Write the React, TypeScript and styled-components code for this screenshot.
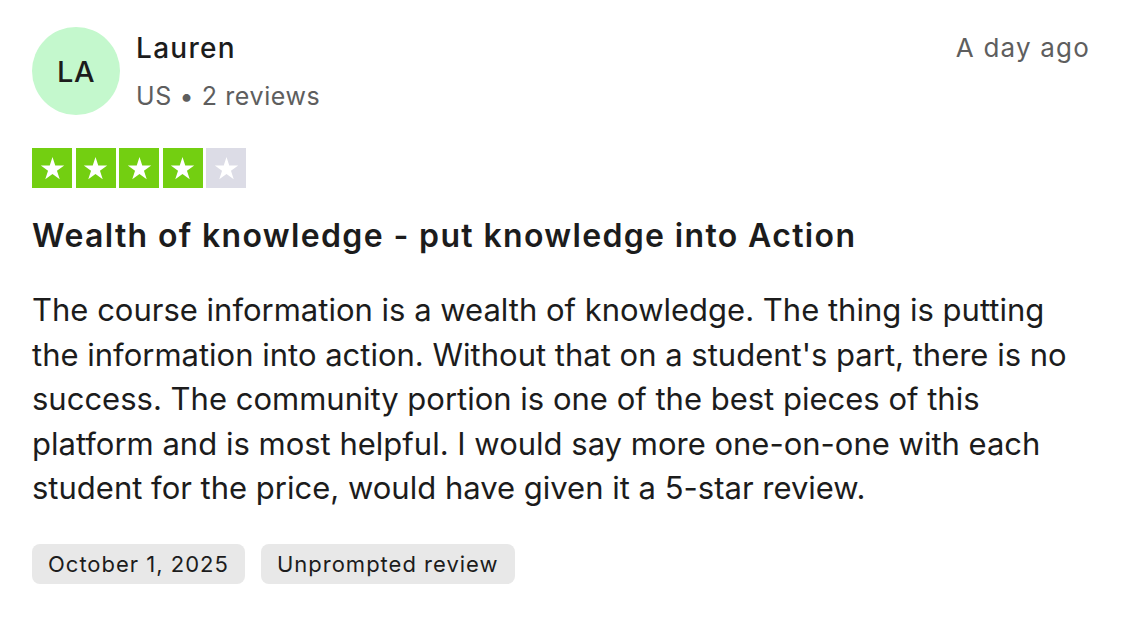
import React from "react";
import styled, { createGlobalStyle } from "styled-components";

const Global = createGlobalStyle`
  html, body { margin: 0; padding: 0; background: #ffffff; }
  body { font-family: Inter, "Noto Sans", sans-serif; color: #1c1c1c; }
`;

const Card = styled.article`
  width: 1124px;
  box-sizing: border-box;
  padding: 27px 34px 0 32px;
  display: flex;
  flex-direction: column;
`;

const Header = styled.header`
  display: flex;
  align-items: flex-start;
  gap: 16px;
`;

const Avatar = styled.div`
  width: 88px;
  height: 88px;
  border-radius: 50%;
  background: #c4f8cd;
  display: flex;
  align-items: center;
  justify-content: center;
  font-size: 29px;
  font-weight: 500;
  letter-spacing: 0.4px;
  color: #1c1c1c;
  flex-shrink: 0;
`;

const Who = styled.div`
  display: flex;
  flex-direction: column;
  flex: 1;
  padding-top: 3px;
`;

const Name = styled.div`
  font-size: 28px;
  font-weight: 500;
  letter-spacing: 1.3px;
  line-height: 36px;
  color: #1c1c1c;
`;

const Meta = styled.div`
  font-size: 25px;
  letter-spacing: 0.6px;
  line-height: 36px;
  margin-top: 12px;
  color: #5e5e5e;
`;

const When = styled.div`
  font-size: 26px;
  letter-spacing: 1.2px;
  line-height: 36px;
  color: #5e5e5e;
  padding-top: 3px;
`;

const Stars = styled.div`
  display: flex;
  gap: 3.5px;
  margin-top: 33px;
`;

const StarBox = styled.div<{ $on: boolean }>`
  width: 40px;
  height: 40px;
  background: ${(p) => (p.$on ? "#73cf11" : "#dcdce6")};
  display: flex;
  align-items: center;
  justify-content: center;
`;

const Title = styled.h2`
  margin: 28px 0 0;
  font-size: 32px;
  font-weight: 600;
  line-height: 40px;
  letter-spacing: 1.35px;
  color: #1c1c1c;
`;

const Body = styled.p`
  margin: 32px 0 0;
  font-size: 31px;
  letter-spacing: 0;
  line-height: 44.5px;
  color: #1c1c1c;
`;

const Tags = styled.div`
  display: flex;
  gap: 16px;
  margin-top: 33px;
`;

const Tag = styled.span`
  background: #e8e8e8;
  border-radius: 8px;
  height: 40px;
  padding: 0 16px;
  display: flex;
  align-items: center;
  font-size: 22px;
  letter-spacing: 1px;
  color: #1c1c1c;
`;

const Star = () => (
  <svg width="27" height="27" viewBox="0 0 24 24">
    <path
      d="M12 1.8l2.45 7.55h7.95l-6.43 4.67 2.46 7.56L12 16.92l-6.43 4.66 2.46-7.56L1.6 9.35h7.95z"
      fill="#ffffff"
    />
  </svg>
);

export default function App() {
  const rating = 4;
  return (
    <>
      <Global />
      <Card>
        <Header>
          <Avatar>LA</Avatar>
          <Who>
            <Name>Lauren</Name>
            <Meta>US • 2 reviews</Meta>
          </Who>
          <When>A day ago</When>
        </Header>
        <Stars>
          {[0, 1, 2, 3, 4].map((i) => (
            <StarBox key={i} $on={i < rating}>
              <Star />
            </StarBox>
          ))}
        </Stars>
        <Title>Wealth of knowledge - put knowledge into Action</Title>
        <Body>
          The course information is a wealth of knowledge. The thing is putting
          the information into action. Without that on a student's part, there
          is no success. The community portion is one of the best pieces of
          this platform and is most helpful. I would say more one-on-one with
          each student for the price, would have given it a 5-star review.
        </Body>
        <Tags>
          <Tag>October 1, 2025</Tag>
          <Tag>Unprompted review</Tag>
        </Tags>
      </Card>
    </>
  );
}
